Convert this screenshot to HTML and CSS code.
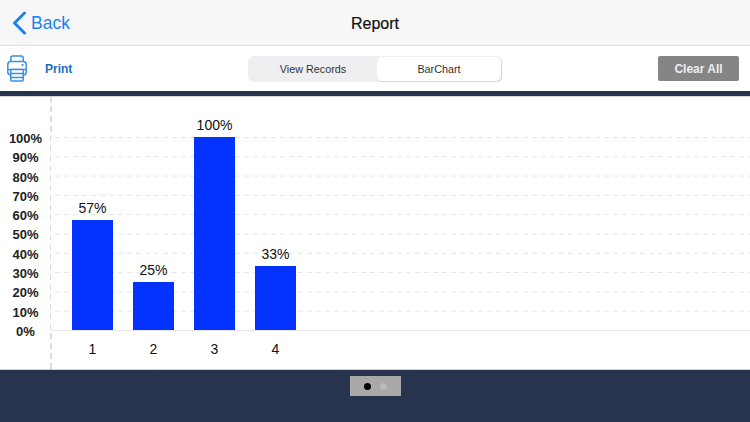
FILE: index.html
```html
<!DOCTYPE html>

<html>

<head>
  <meta charset="UTF-8" />
  <meta name="viewport" content="width=device-width, initial-scale=1.0" />
  <title>Report</title>
  <link rel="stylesheet" href="styles.css">
</head>

<body>
  <header class='navbar'>
    <a class='back'>
      <svg width="16" height="24" viewBox="0 0 16 24" fill="none">
        <path d="M13.500 2L3.500 12L13.500 22" stroke="#1a82f0" stroke-width="3" stroke-linecap="round" stroke-linejoin="round"></path>
      </svg>
      <span>Back</span>
    </a>
    <h1>Report</h1>
  </header>

  <div class='toolbar'>
    <a class='print'>
      <svg width="20" height="27" viewBox="0 0 20 27" fill="none" stroke="#3a8fe4" stroke-width="1.5" stroke-linejoin="round">
        <path d="M3.800 7V3C3.800 1.800 4.600 1 5.800 1H14.200C15.400 1 16.200 1.800 16.200 3V7"></path>
        <rect x="0.800" y="6.500" width="18.400" height="13.500" rx="3"></rect>
        <path d="M0.800 14.500H19.200"></path>
        <rect x="3.800" y="14.500" width="12.400" height="11.500" rx="1" fill="#fff"></rect>
        <path d="M3.800 18.500H16.200M3.800 22.500H16.200"></path>
        <circle cx="15.500" cy="10" r="0.400"></circle>
      </svg>
      <span>Print</span>
    </a>
    <div class='segmented'>
      <button class='segment'>View Records</button>
      <button class='segment active'>BarChart</button>
    </div>
    <button class='clearAll'>Clear All</button>
  </div>

  <main class='chart'>
    <div class='yAxis'>
      <p>100%</p>
      <p>90%</p>
      <p>80%</p>
      <p>70%</p>
      <p>60%</p>
      <p>50%</p>
      <p>40%</p>
      <p>30%</p>
      <p>20%</p>
      <p>10%</p>
      <p>0%</p>
    </div>
    <div class='plotArea'>
      <div class='plot'>
        <div class='bars'>
          <div class='barColumn'>
            <span class='barValue'>57%</span>
            <div class='bar' style='height: 110px'></div>
          </div>
          <div class='barColumn'>
            <span class='barValue'>25%</span>
            <div class='bar' style='height: 48px'></div>
          </div>
          <div class='barColumn'>
            <span class='barValue'>100%</span>
            <div class='bar' style='height: 193px'></div>
          </div>
          <div class='barColumn'>
            <span class='barValue'>33%</span>
            <div class='bar' style='height: 64px'></div>
          </div>
        </div>
      </div>
      <div class='xAxis'>
        <span>1</span>
        <span>2</span>
        <span>3</span>
        <span>4</span>
      </div>
    </div>
  </main>

  <footer class='footer'>
    <div class='pager'>
      <span class='dot current'></span>
      <span class='dot'></span>
    </div>
  </footer>
</body>

</html>
```

FILE: styles.css
```css
* {
  box-sizing: border-box;
}

body {
  margin: 0;
  height: 422px;
  overflow: hidden;
  display: flex;
  flex-direction: column;
  font-family: "Liberation Sans", Arial, sans-serif;
  background-color: #fff;
}

.navbar {
  height: 46px;
  display: grid;
  grid-template-columns: 1fr auto 1fr;
  align-items: center;
  background-color: #f7f7f7;
  border-bottom: 1px solid #e0e0e0;
}

.navbar h1 {
  grid-column: 2;
  margin: 0 0 -2px;
  font-size: 16px;
  font-weight: normal;
  color: #111;
  -webkit-text-stroke: 0.2px #111;
}

.back {
  grid-column: 1;
  grid-row: 1;
  display: flex;
  align-items: center;
  gap: 4px;
  padding-left: 11px;
  font-size: 17.5px;
  color: #1a82f0;
}

.back span {
  padding-top: 2px;
}

.toolbar {
  height: 45px;
  display: grid;
  grid-template-columns: 1fr 254px 1fr;
  align-items: center;
  background-color: #fff;
}

.print {
  display: flex;
  align-items: center;
  gap: 18px;
  padding-left: 7px;
  font-size: 12px;
  font-weight: bold;
  color: #1b6fc4;
}

.segmented {
  height: 26px;
  display: flex;
  padding: 1px;
  border-radius: 6px;
  background-color: #eeeff1;
}

.segment {
  padding: 0;
  border: none;
  border-radius: 5px;
  background-color: transparent;
  font-family: inherit;
  font-size: 10.8px;
  color: #333;
  flex: 0 0 128px;
}

.segment.active {
  flex: 0 0 124px;
  background-color: #fff;
  box-shadow: 1px 1px 1px #d4d4d4;
}

.clearAll {
  justify-self: end;
  width: 81px;
  height: 25px;
  margin-right: 11px;
  padding: 0;
  border: none;
  border-radius: 2px;
  background-color: #858585;
  font-family: inherit;
  font-size: 12px;
  font-weight: bold;
  color: #eee;
}

.chart {
  height: 279px;
  display: flex;
  border-top: 5px solid #28334e;
  border-bottom: 1px solid #d0d0d0;
}

.yAxis {
  width: 52px;
  padding: 32px 0 0 1px;
  border-top: 1px solid #d8d8d8;
  border-right: 2px dashed #dcdcdc;
  margin-right: -1px;
}

.yAxis p {
  margin: 0;
  height: 19.3px;
  line-height: 19.3px;
  text-align: center;
  font-size: 13px;
  font-weight: bold;
  color: #222;
}

.plotArea {
  flex: 1;
  padding-top: 12px;
  border-top: 1px solid #d8d8d8;
}

.plot {
  height: 222px;
  display: flex;
  align-items: flex-end;
  padding-left: 21px;
  border-bottom: 1px solid #e6e6e6;
  position: relative;
}

/* dashed grid lines sit behind the bars */
.plot::before {
  content: '';
  position: absolute;
  left: 0;
  right: 0;
  bottom: 0;
  height: 193px;
  background-image:
    linear-gradient(to right, #fff 0 4px, transparent 4px),
    linear-gradient(to bottom, #e4e4e4 0 1px, transparent 1px);
  background-size: 9px 100%, 100% 19.3px;
}

.bars {
  position: relative;
  display: flex;
  gap: 20px;
  align-items: flex-end;
}

.barColumn {
  width: 41px;
  display: flex;
  flex-direction: column;
  align-items: center;
}

.barValue {
  margin-bottom: 4px;
  font-size: 14px;
  color: #111;
  white-space: nowrap;
}

.bar {
  width: 100%;
  background-color: #0433ff;
}

.xAxis {
  display: flex;
  gap: 20px;
  padding: 10px 0 0 21px;
}

.xAxis span {
  width: 41px;
  text-align: center;
  font-size: 14px;
  color: #111;
}

.footer {
  flex: 1;
  display: flex;
  justify-content: center;
  align-items: flex-start;
  padding-top: 6px;
  background-color: #28334e;
}

.pager {
  width: 51px;
  height: 20px;
  display: flex;
  justify-content: center;
  align-items: center;
  gap: 9px;
  background-color: #a9a9a9;
}

.dot {
  width: 7px;
  height: 7px;
  border-radius: 50%;
  background-color: #b9b9b9;
}

.dot.current {
  background-color: #000;
}
```
